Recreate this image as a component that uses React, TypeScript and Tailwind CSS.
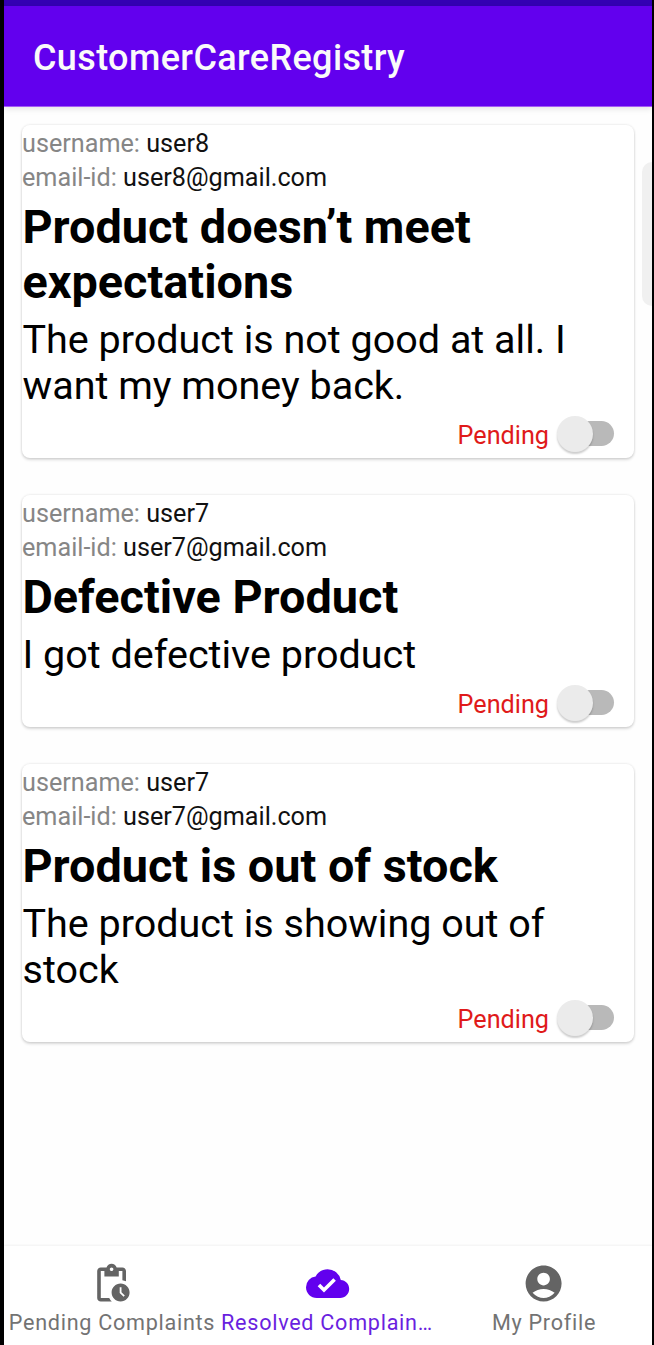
import type { ReactNode } from "react";
import { MdAccountCircle, MdCloudDone } from "react-icons/md";

type Complaint = { username: string; email: string; title: string; body: string };

const complaints: Complaint[] = [
  {
    username: "user8",
    email: "user8@gmail.com",
    title: "Product doesn’t meet expectations",
    body: "The product is not good at all. I want my money back.",
  },
  {
    username: "user7",
    email: "user7@gmail.com",
    title: "Defective Product",
    body: "I got defective product",
  },
  {
    username: "user7",
    email: "user7@gmail.com",
    title: "Product is out of stock",
    body: "The product is showing out of stock",
  },
];

function PendingIcon() {
  return (
    <svg viewBox="0 0 24 24" width="1em" height="1em" fill="currentColor">
      <path d="M17 12c-2.76 0-5 2.24-5 5s2.24 5 5 5 5-2.24 5-5-2.24-5-5-5zm1.65 7.35L16.5 17.2V14h1v2.79l1.85 1.85-.7.71zM18 3h-3.18C14.4 1.84 13.3 1 12 1s-2.4.84-2.82 2H6c-1.1 0-2 .9-2 2v15c0 1.1.9 2 2 2h6.11a6.743 6.743 0 0 1-1.42-2H6V5h2v3h8V5h2v5.08c.71.1 1.38.31 2 .6V5c0-1.1-.9-2-2-2zm-6 2c-.55 0-1-.45-1-1s.45-1 1-1 1 .45 1 1-.45 1-1 1z" />
    </svg>
  );
}

function Toggle() {
  return (
    <button aria-label="Resolved" className="flex h-[36px] w-[57px] items-center">
      <span className="z-10 h-[36px] w-[36px] shrink-0 rounded-full bg-[#ebebeb] shadow-[0_2px_2px_rgba(0,0,0,0.2)]" />
      <span className="-ml-[29px] h-[25px] w-[50px] shrink-0 rounded-full bg-[#b9b9b9]" />
    </button>
  );
}

function Field({ label, value }: { label: string; value: string }) {
  return (
    <p className="h-[34px] text-[25.2px] leading-[30px] text-[#111111]">
      <span className="text-[#868686]">{label}: </span>
      {value}
    </p>
  );
}

function ComplaintCard({ item }: { item: Complaint }) {
  return (
    <article className="rounded-[8px] bg-white pt-[4px] shadow-[0_0_2px_1px_rgba(0,0,0,0.06),0_2px_3px_rgba(0,0,0,0.14)]">
      <Field label="username" value={item.username} />
      <Field label="email-id" value={item.email} />
      <h2 className="pt-[3px] pl-[0.4px] text-[46.8px] leading-[55px] font-bold text-black">{item.title}</h2>
      <p className="pt-[7px] pl-[0.5px] text-[39.5px] leading-[46.4px] text-black">{item.body}</p>
      <div className="flex h-[48.6px] items-start justify-end gap-[7.5px] pt-[6px] pr-[20.5px]">
        <span className="pt-[5px] text-[25.2px] leading-[30px] text-[#e01a1a]">Pending</span>
        <Toggle />
      </div>
    </article>
  );
}

function NavItem({ icon, label, active = false }: { icon: ReactNode; label: string; active?: boolean }) {
  return (
    <button
      className={`flex w-[216px] shrink-0 flex-col items-center pt-[16px] text-[43.2px] ${
        active ? "text-[#6200ee]" : "text-[#646464]"
      }`}
    >
      {icon}
      <span
        className={`mt-[5px] text-[21.6px] leading-[26px] whitespace-nowrap ${
          active ? "pr-[2px] tracking-[0.72px] text-[#6a1fe0]" : "tracking-[0.72px] text-[#737373]"
        }`}
      >
        {label}
      </span>
    </button>
  );
}

export default function App() {
  return (
    <div className="h-[1345px] w-[654px] overflow-hidden bg-black pr-[2px] pl-[4px] font-['Roboto',sans-serif]">
      <div className="relative flex h-full flex-col bg-[#fefefe]">
        <div className="h-[6px] shrink-0 bg-[#3400b3]" />
        <header className="z-10 flex h-[101px] shrink-0 items-center border-b border-[#a45af5] bg-[#6200ee] pt-[4px] pl-[29px] shadow-[0_2px_6px_rgba(0,0,0,0.1)]">
          <h1 className="text-[36px] leading-[42px] font-medium tracking-[0.37px] text-[#fafafa]">CustomerCareRegistry</h1>
        </header>
        <main className="flex grow flex-col gap-[36.8px] pt-[18px] pr-[18px] pl-[18px]">
          {complaints.map((item) => (
            <ComplaintCard key={item.title} item={item} />
          ))}
        </main>
        <div className="absolute top-[162px] right-0 h-[144px] w-[10px] rounded-l-[10px] bg-[#f0f0f0]" />
        <nav className="flex h-[99px] shrink-0 bg-white shadow-[0_-1px_2px_rgba(0,0,0,0.05)]">
          <NavItem icon={<PendingIcon />} label="Pending Complaints" />
          <NavItem icon={<MdCloudDone />} label="Resolved Complain…" active />
          <NavItem icon={<MdAccountCircle />} label="My Profile" />
        </nav>
      </div>
    </div>
  );
}
